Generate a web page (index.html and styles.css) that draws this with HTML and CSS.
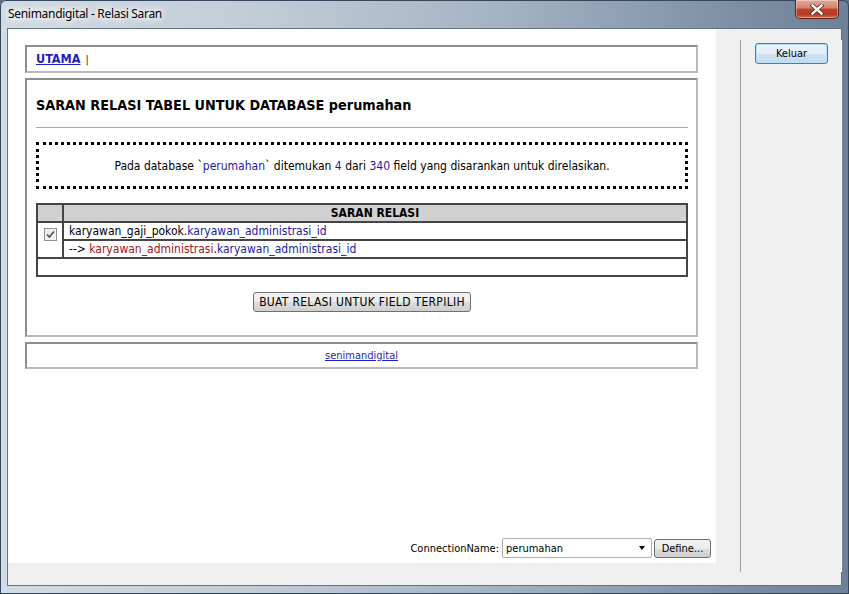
FILE: index.html
```html
<!DOCTYPE html>
<html>
<head>
<meta charset="utf-8">
<title>Senimandigital - Relasi Saran</title>
<link rel="stylesheet" href="styles.css">
</head>
<body>
<div class="window">
  <div class="titlebar">
    <span class="title">Senimandigital - Relasi Saran</span>
    <button class="close" aria-label="Close">
      <svg width="14" height="11" viewBox="0 0 14 11">
        <path d="M2.5 1.5 L11.5 9.5 M11.5 1.5 L2.5 9.5" stroke="#5a2a22" stroke-width="4" stroke-linecap="square" fill="none"/>
        <path d="M2.5 1.5 L11.5 9.5 M11.5 1.5 L2.5 9.5" stroke="#ffffff" stroke-width="2.4" stroke-linecap="square" fill="none"/>
      </svg>
    </button>
  </div>
  <div class="client">
    <div class="leftcol">
      <div class="browser">
        <div class="pages">
          <div class="box nav"><a class="home" href="#">UTAMA</a> <span class="sep">|</span></div>
          <div class="box content">
            <h1 class="heading">SARAN RELASI TABEL UNTUK DATABASE perumahan</h1>
            <div class="rule"></div>
            <div class="notice">Pada database `<span class="hl">perumahan</span>` ditemukan <span class="hl">4</span> dari <span class="hl">340</span> field yang disarankan untuk direlasikan.</div>
            <table class="grid">
              <tr>
                <th class="chk-col"></th>
                <th>SARAN RELASI</th>
              </tr>
              <tr>
                <td class="chk-cell" rowspan="2">
                  <span class="checkbox">
                    <svg width="11" height="11" viewBox="0 0 11 11"><path d="M2 5.5 L4.3 8 L9 2.5" stroke="#4d4d4d" stroke-width="1.6" fill="none"/></svg>
                  </span>
                </td>
                <td class="txt">karyawan_gaji_pokok.<span class="fld">karyawan_administrasi_id</span></td>
              </tr>
              <tr>
                <td class="txt">--&gt; <span class="tbl">karyawan_administrasi</span>.<span class="fld">karyawan_administrasi_id</span></td>
              </tr>
              <tr>
                <td class="empty" colspan="2">&nbsp;</td>
              </tr>
            </table>
            <div class="actions"><button class="btn">BUAT RELASI UNTUK FIELD TERPILIH</button></div>
          </div>
          <div class="box foot"><a href="#">senimandigital</a></div>
        </div>
        <div class="conn">
          <span class="conn-label">ConnectionName:</span>
          <div class="combo"><span>perumahan</span><span class="arrow"></span></div>
          <button class="winbtn define">Define...</button>
        </div>
      </div>
      <div class="statusbar"></div>
    </div>
    <div class="side">
      <div class="side-inner">
        <button class="winbtn keluar">Keluar</button>
      </div>
    </div>
  </div>
</div>
</body>
</html>
```

FILE: styles.css
```css
* { box-sizing: border-box; }
html, body { margin: 0; padding: 0; }
body {
  width: 849px;
  height: 594px;
  overflow: hidden;
  background: #5d6f83;
  font-family: "DejaVu Sans Condensed", "DejaVu Sans", sans-serif;
  font-stretch: semi-condensed;
}
.window {
  width: 849px;
  height: 594px;
  display: flex;
  flex-direction: column;
  padding: 0 7px 8px 7px;
  border-radius: 6px 6px 0 0;
  background:
    linear-gradient(to right, #d3dbe4 0%, #c2ccd7 30%, #a3b2c2 60%, #7e91a6 85%, #6d8197 100%);
  box-shadow: inset 0 0 0 1px #34475c;
}
.titlebar {
  height: 28px;
  display: flex;
  justify-content: space-between;
  align-items: flex-start;
}
.title {
  font-family: "Noto Sans", "Open Sans", sans-serif;
  font-size: 12px;
  line-height: 16px;
  padding: 6px 0 0 1px;
  color: #000;
  letter-spacing: -0.3px;
  text-shadow: 0 0 6px #fff, 0 0 8px #fff, 0 0 10px #fff;
}
.close {
  width: 44px;
  height: 19px;
  margin: 0 3px 0 0;
  padding: 0;
  border: 1px solid #5b241c;
  border-top: none;
  border-radius: 0 0 5px 5px;
  background: linear-gradient(to bottom, #e3a99c 0%, #d6816d 45%, #c2412b 50%, #b83a25 80%, #d26b4e 100%);
  box-shadow: inset 0 0 0 1px rgba(255,255,255,0.35);
  display: flex;
  align-items: center;
  justify-content: center;
}
.client {
  flex: 1;
  display: flex;
  border: 1px solid #5f7288;
  background: #f0f0f0;
}
.leftcol {
  width: 708px;
  display: flex;
  flex-direction: column;
}
.browser {
  flex: 1;
  background: #fff;
  display: flex;
  flex-direction: column;
  padding: 16px 5px 5px 17px;
}
.statusbar {
  height: 22px;
  background: #f0f0f0;
}
.pages {
  flex: 1;
  display: flex;
  flex-direction: column;
  gap: 5px;
  margin-right: 13px;
}
.box {
  border: 2px solid #a3a3a3;
  border-color: #8d8d8d #b9b9b9 #b9b9b9 #8d8d8d;
  font-size: 11px;
}
.nav {
  height: 28px;
  line-height: 24px;
  padding-left: 9px;
}
.home {
  color: #1f1fc0;
  font-weight: bold;
  font-size: 12.5px;
}
.sep { color: #800000; margin-left: 2px; }
.content {
  height: 259px;
  padding: 0 8px 0 9px;
}
.heading {
  margin: 16px 0 0 0;
  font-size: 14.3px;
  line-height: 18px;
  font-weight: bold;
  color: #000;
}
.rule {
  margin-top: 13px;
  border-top: 1px solid #a8a8a8;
}
.notice {
  margin-top: 14px;
  height: 47px;
  border: 3px dotted #000;
  text-align: center;
  line-height: 43px;
  font-size: 12px;
  color: #000;
}
.hl { color: #1c1c9c; }
.grid {
  margin-top: 14px;
  width: 100%;
  border-collapse: separate;
  border-spacing: 0;
  border: 1px solid #444;
}
.grid th, .grid td {
  border: 1px solid #444;
  padding: 0;
  line-height: 16px;
  font-size: 12px;
}
.grid th {
  background: #d1d1d1;
  font-weight: bold;
  text-align: center;
}
.chk-col { width: 26px; }
.chk-cell {
  vertical-align: top;
  text-align: center;
  padding-top: 5px !important;
}
.checkbox {
  display: inline-block;
  width: 13px;
  height: 13px;
  border: 1px solid #8e8f8f;
  background: linear-gradient(to bottom, #e6e6e6, #f7f7f7);
  box-shadow: inset 0 0 0 1px #f4f4f4;
  vertical-align: top;
}
.checkbox svg { display: block; }
.txt { padding-left: 5px !important; color: #000; }
.fld { color: #1c1c9c; }
.tbl { color: #a01414; }
.actions {
  margin-top: 15px;
  text-align: center;
}
.btn {
  height: 20px;
  padding: 0 5px;
  font-family: inherit;
  font-size: 12px;
  letter-spacing: 0.3px;
  color: #000;
  border: 1px solid #707070;
  border-radius: 3px;
  background: linear-gradient(to bottom, #f2f2f2 0%, #ebebeb 50%, #dddddd 51%, #cfcfcf 100%);
}
.foot {
  height: 27px;
  line-height: 23px;
  text-align: center;
}
.foot a { color: #1f1fc0; }
.conn {
  display: flex;
  justify-content: flex-end;
  align-items: center;
  font-size: 11px;
}
.conn-label { margin-right: 3px; }
.combo {
  width: 150px;
  height: 20px;
  border: 1px solid #abadb3;
  border-radius: 2px;
  background: #fff;
  display: flex;
  align-items: center;
  justify-content: space-between;
  padding: 0 6px 0 3px;
  margin-right: 2px;
}
.arrow {
  width: 0; height: 0;
  border-left: 3.5px solid transparent;
  border-right: 3.5px solid transparent;
  border-top: 4px solid #000;
}
.winbtn {
  font-family: inherit;
  font-size: 11px;
  color: #000;
  border: 1px solid #707070;
  border-radius: 3px;
  background: linear-gradient(to bottom, #f2f2f2 0%, #ebebeb 50%, #dddddd 51%, #cfcfcf 100%);
  padding: 0;
}
.define { width: 57px; height: 19px; }
.side {
  width: 125px;
  padding: 11px 0 13px 24px;
}
.side-inner {
  height: 100%;
  border-left: 1px solid #a0a0a0;
  box-shadow: 1px 0 0 #fff;
  padding: 2px 0 0 14px;
}
.keluar {
  width: 73px;
  height: 21px;
  border-color: #3c7fb1;
  background: linear-gradient(to bottom, #eaf4fb 0%, #e2eef8 50%, #cfe3f2 51%, #c2dbee 100%);
  box-shadow: inset 0 0 0 1px #b9e2f8;
}
```
